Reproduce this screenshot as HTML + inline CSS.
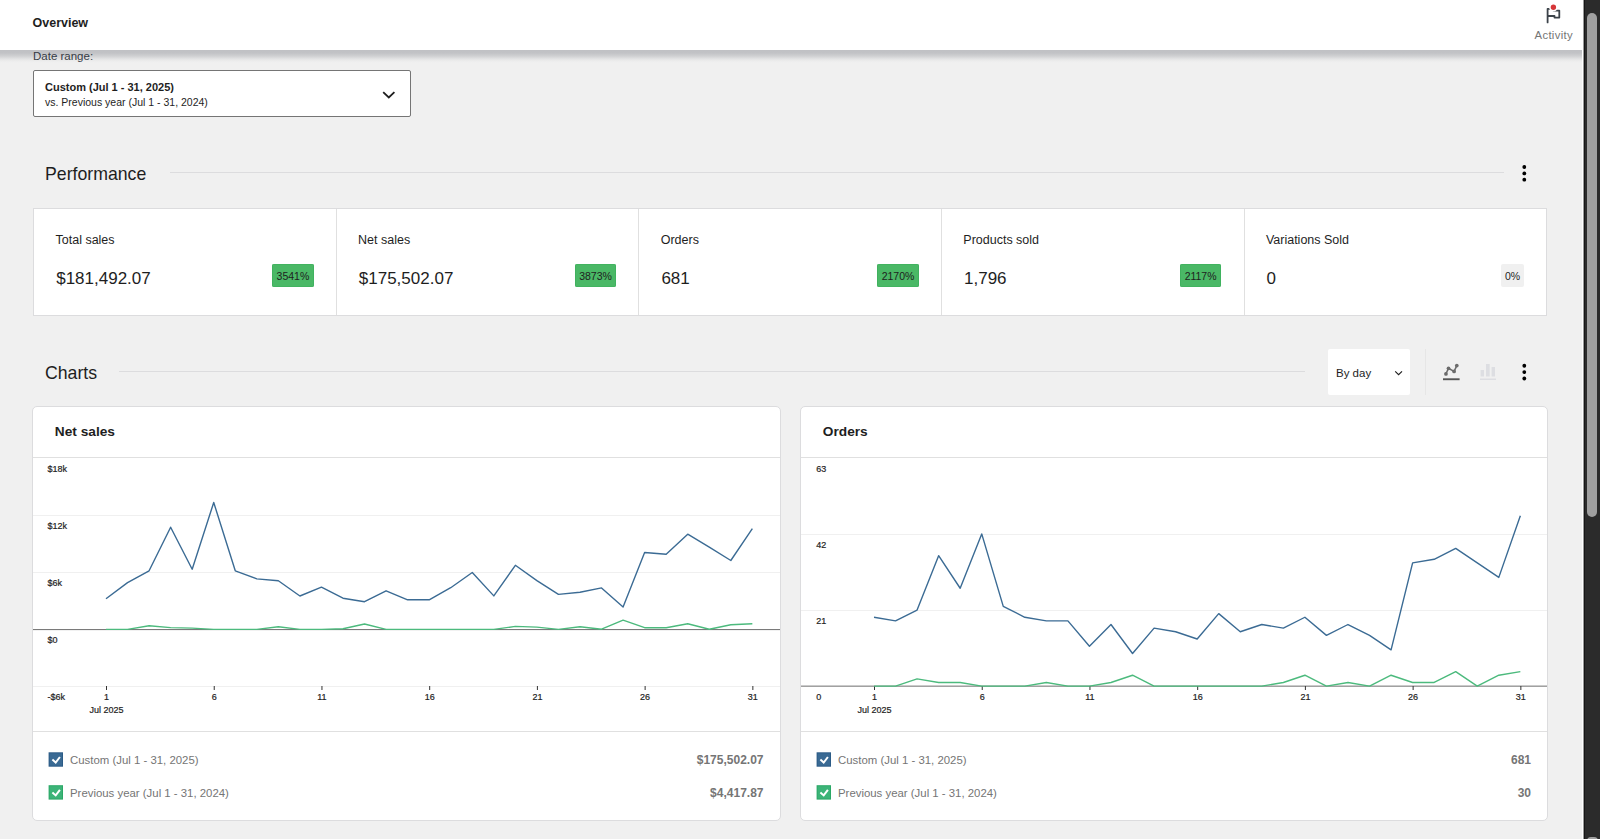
<!DOCTYPE html>
<html><head><meta charset="utf-8">
<style>
*{box-sizing:border-box;margin:0;padding:0}
html,body{width:1600px;height:839px;overflow:hidden;background:#f0f0f0;font-family:"Liberation Sans",sans-serif;color:#1e1e1e}
.a{position:absolute;white-space:nowrap}
.t{position:absolute;white-space:nowrap;line-height:1}
#hdr{position:absolute;left:0;top:0;width:1584px;height:50px;background:#fff;z-index:5}
#shadow{position:absolute;left:0;top:50px;width:1584px;height:13px;z-index:5;background:linear-gradient(to bottom,rgba(20,25,40,0.22) 0,rgba(20,25,40,0.21) 3px,rgba(20,25,40,0.15) 6px,rgba(20,25,40,0.06) 9px,rgba(20,25,40,0.015) 11px,rgba(20,25,40,0) 13px)}
#sb{position:absolute;left:1584px;top:0;width:16px;height:839px;background:#2b2b2b;border-left:1px solid #161616;z-index:6}
#thumb{position:absolute;left:1587px;top:13px;width:10px;height:504px;background:#a0a0a0;border-radius:5px;z-index:7}
.card{position:absolute;background:#fff;border:1px solid #dcdcde}
.cell{position:absolute;top:0;height:106px;border-right:1px solid #dcdcde}
.lbl{position:absolute;font-size:12.5px;line-height:1;color:#1e1e1e}
.val{position:absolute;font-size:17px;line-height:1;color:#1e1e1e}
.badge{position:absolute;width:41.8px;height:23.3px;border-radius:2px;background:#4ab866;box-shadow:inset 0 0 0 0.6px #3aad5a;color:#1e1e1e;font-size:10.5px;line-height:24.9px;text-align:center}
.kebab i{position:absolute;width:3.8px;height:3.8px;border-radius:50%;background:#000}
</style></head><body>

<div id="hdr">
  <div class="t" style="left:32.5px;top:17px;font-size:12.5px;font-weight:bold;color:#1e1e1e">Overview</div>
  <svg class="a" style="left:1540px;top:0px" width="24" height="26" viewBox="1540 0 24 26">
    <path d="M1547.6 22.4V8.8H1553.5V10.6H1559.3V17.6H1554.5V16H1547.6" fill="none" stroke="#3c434a" stroke-width="1.8" stroke-linejoin="round" stroke-linecap="round"/>
    <circle cx="1553.4" cy="7.3" r="3.5" fill="#d63638" stroke="#fff" stroke-width="1.6"/>
  </svg>
  <div class="t" style="left:1534.5px;top:29.6px;font-size:11.3px;letter-spacing:0.35px;color:#757575">Activity</div>
</div>
<div id="shadow"></div>
<div id="sb"></div><div id="thumb"></div>
<div class="a" style="left:1582px;top:0;width:1px;height:839px;background:#fff;z-index:6"></div><div class="a" style="left:1583px;top:0;width:1px;height:839px;background:#9a9a9a;z-index:6"></div>
<div class="a" style="left:1587px;top:837px;width:10.5px;height:8px;background:#a0a0a0;border-radius:4px;z-index:7"></div>

<div class="t" style="left:33px;top:50.7px;font-size:11.5px;color:#3c434a">Date range:</div>
<div class="a" style="left:33px;top:70px;width:378px;height:47px;background:#fff;border:1px solid #757575;border-radius:2px">
  <div class="t" style="left:11px;top:11px;font-size:11px;font-weight:bold">Custom (Jul 1 - 31, 2025)</div>
  <div class="t" style="left:11px;top:26px;font-size:10.5px">vs. Previous year (Jul 1 - 31, 2024)</div>
  <svg class="a" style="left:348px;top:19px" width="14" height="10" viewBox="0 0 14 10"><path d="M1.2 2.1l5.6 5.4 5.6-5.4" fill="none" stroke="#1e1e1e" stroke-width="1.8"/></svg>
</div>

<!-- Performance -->
<div class="t" style="left:45px;top:165.8px;font-size:17.7px;color:#1e1e1e">Performance</div>
<div class="a" style="left:170px;top:172px;width:1334px;height:1px;background:#dcdcde"></div>
<svg class="a" style="left:1514px;top:157px" width="20" height="32" viewBox="1514 157 20 32"><circle cx="1524.3" cy="167" r="1.9"/><circle cx="1524.3" cy="173.4" r="1.9"/><circle cx="1524.3" cy="179.7" r="1.9"/></svg>

<div class="card" style="left:33px;top:208px;width:1514px;height:108px"></div>
<div class="lbl" style="left:55.5px;top:234.4px">Total sales</div>
<div class="val" style="left:56.2px;top:269.5px">$181,492.07</div>
<div class="a" style="left:335.75px;top:209px;width:1px;height:106px;background:#e0e0e0"></div>
<div class="badge" style="left:272.0px;top:263.7px">3541%</div>
<div class="lbl" style="left:358.1px;top:234.4px">Net sales</div>
<div class="val" style="left:358.8px;top:269.5px">$175,502.07</div>
<div class="a" style="left:638.35px;top:209px;width:1px;height:106px;background:#e0e0e0"></div>
<div class="badge" style="left:574.6px;top:263.7px">3873%</div>
<div class="lbl" style="left:660.7px;top:234.4px">Orders</div>
<div class="val" style="left:661.4px;top:269.5px">681</div>
<div class="a" style="left:940.95px;top:209px;width:1px;height:106px;background:#e0e0e0"></div>
<div class="badge" style="left:877.1px;top:263.7px">2170%</div>
<div class="lbl" style="left:963.3px;top:234.4px">Products sold</div>
<div class="val" style="left:964.0px;top:269.5px">1,796</div>
<div class="a" style="left:1243.55px;top:209px;width:1px;height:106px;background:#e0e0e0"></div>
<div class="badge" style="left:1179.7px;top:263.7px">2117%</div>
<div class="lbl" style="left:1265.9px;top:234.4px">Variations Sold</div>
<div class="val" style="left:1266.6px;top:269.5px">0</div>
<div class="badge" style="left:1501px;top:264px;width:23px;background:#f0f0f0;box-shadow:none">0%</div>

<!-- Charts header -->
<div class="t" style="left:45px;top:364.6px;font-size:17.7px;color:#1e1e1e">Charts</div>
<div class="a" style="left:119px;top:371px;width:1186px;height:1px;background:#dcdcde"></div>
<div class="a" style="left:1328px;top:349px;width:82px;height:46px;background:#fff;border-radius:2px">
  <div class="t" style="left:8px;top:19px;font-size:11.5px;color:#1e1e1e">By day</div>
  <svg class="a" style="left:64px;top:18px" width="12" height="10" viewBox="1392 367 12 10"><path d="M1395.2 371.4l3.4 3.3 3.4-3.3" fill="none" stroke="#1e1e1e" stroke-width="1.15"/></svg>
</div>
<div class="a" style="left:1425px;top:349px;width:1px;height:46px;background:#e6e6e6"></div>
<svg class="a" style="left:1440px;top:360px" width="24" height="24" viewBox="0 0 24 24">
  <path d="M5.95 13.9 L8.5 8.3 L14.1 11.4 L16.8 5.6" fill="none" stroke="#6b6b6b" stroke-width="1.5"/>
  <circle cx="5.95" cy="13.9" r="1.85" fill="#6b6b6b"/><circle cx="8.5" cy="8.3" r="1.85" fill="#6b6b6b"/><circle cx="14.1" cy="11.4" r="1.85" fill="#6b6b6b"/><circle cx="16.8" cy="5.6" r="1.85" fill="#6b6b6b"/>
  <rect x="3" y="18.3" width="16.6" height="1.9" fill="#555"/>
</svg>
<svg class="a" style="left:1476px;top:360px" width="24" height="24" viewBox="0 0 24 24">
  <rect x="4.6" y="10" width="3.4" height="6.5" fill="#dddee2"/><rect x="10" y="4" width="3.7" height="12.5" fill="#dddee2"/><rect x="15.6" y="7" width="3.4" height="9.5" fill="#dddee2"/>
  <rect x="4" y="18.5" width="16" height="1.5" fill="#dddee2"/>
</svg>
<svg class="a" style="left:1514px;top:356px" width="20" height="32" viewBox="1514 356 20 32"><circle cx="1524.3" cy="365.75" r="1.9"/><circle cx="1524.3" cy="372.1" r="1.9"/><circle cx="1524.3" cy="378.5" r="1.9"/></svg>

<div class="card" style="left:32px;top:406px;width:749px;height:415px;border-radius:5px;border-color:#dcdcde"></div>
<div class="t" style="left:54.8px;top:425px;font-size:13.7px;font-weight:bold;color:#1e1e1e">Net sales</div>
<svg class="a" style="left:32px;top:0px" width="749" height="839" viewBox="32 0 749 839">
<rect x="33" y="457" width="747" height="1" fill="#e0e0e0"/>
<rect x="33" y="515" width="747" height="1" fill="#f0f0f0"/>
<rect x="33" y="572" width="747" height="1" fill="#f0f0f0"/>
<rect x="33" y="686" width="747" height="1" fill="#f0f0f0"/>
<rect x="33" y="629.00" width="747" height="1.1" fill="#7a7a7a"/>
<rect x="106.00" y="686" width="1" height="4" fill="#333"/>
<text x="106.50" y="700.3" font-size="9" text-anchor="middle" fill="#1e1e1e" stroke="#1e1e1e" stroke-width="0.2" font-family="Liberation Sans">1</text>
<rect x="213.73" y="686" width="1" height="4" fill="#333"/>
<text x="214.23" y="700.3" font-size="9" text-anchor="middle" fill="#1e1e1e" stroke="#1e1e1e" stroke-width="0.2" font-family="Liberation Sans">6</text>
<rect x="321.45" y="686" width="1" height="4" fill="#333"/>
<text x="321.95" y="700.3" font-size="9" text-anchor="middle" fill="#1e1e1e" stroke="#1e1e1e" stroke-width="0.2" font-family="Liberation Sans">11</text>
<rect x="429.18" y="686" width="1" height="4" fill="#333"/>
<text x="429.68" y="700.3" font-size="9" text-anchor="middle" fill="#1e1e1e" stroke="#1e1e1e" stroke-width="0.2" font-family="Liberation Sans">16</text>
<rect x="536.90" y="686" width="1" height="4" fill="#333"/>
<text x="537.40" y="700.3" font-size="9" text-anchor="middle" fill="#1e1e1e" stroke="#1e1e1e" stroke-width="0.2" font-family="Liberation Sans">21</text>
<rect x="644.62" y="686" width="1" height="4" fill="#333"/>
<text x="645.12" y="700.3" font-size="9" text-anchor="middle" fill="#1e1e1e" stroke="#1e1e1e" stroke-width="0.2" font-family="Liberation Sans">26</text>
<rect x="752.35" y="686" width="1" height="4" fill="#333"/>
<text x="752.85" y="700.3" font-size="9" text-anchor="middle" fill="#1e1e1e" stroke="#1e1e1e" stroke-width="0.2" font-family="Liberation Sans">31</text>
<text x="106.50" y="712.9" font-size="9" text-anchor="middle" fill="#1e1e1e" stroke="#1e1e1e" stroke-width="0.2" font-family="Liberation Sans">Jul 2025</text>
<text x="47.5" y="472.2" font-size="9" fill="#1e1e1e" stroke="#1e1e1e" stroke-width="0.2" font-family="Liberation Sans">$18k</text>
<text x="47.5" y="529.2" font-size="9" fill="#1e1e1e" stroke="#1e1e1e" stroke-width="0.2" font-family="Liberation Sans">$12k</text>
<text x="47.5" y="586.2" font-size="9" fill="#1e1e1e" stroke="#1e1e1e" stroke-width="0.2" font-family="Liberation Sans">$6k</text>
<text x="47.5" y="643.2" font-size="9" fill="#1e1e1e" stroke="#1e1e1e" stroke-width="0.2" font-family="Liberation Sans">$0</text>
<text x="47.5" y="700.2" font-size="9" fill="#1e1e1e" stroke="#1e1e1e" stroke-width="0.2" font-family="Liberation Sans">-$6k</text>
<path d="M106.00 629.40 L127.55 629.40 L149.09 625.80 L170.63 627.60 L192.18 628.10 L213.73 629.40 L235.27 629.40 L256.81 629.40 L278.36 626.70 L299.91 629.40 L321.45 629.40 L343.00 628.70 L364.54 624.00 L386.09 629.40 L407.63 629.40 L429.18 629.40 L450.72 629.40 L472.27 629.40 L493.81 629.40 L515.36 626.40 L536.90 627.10 L558.45 629.40 L579.99 626.70 L601.54 629.20 L623.08 620.20 L644.62 627.70 L666.17 627.70 L687.72 623.80 L709.26 629.20 L730.81 624.70 L752.35 623.80" fill="none" stroke="#4cba7d" stroke-width="1.4" stroke-linejoin="round"/>
<path d="M106.00 598.70 L127.55 582.60 L149.09 570.80 L170.63 527.20 L192.18 569.20 L213.73 502.50 L235.27 570.80 L256.81 578.90 L278.36 580.70 L299.91 596.00 L321.45 587.10 L343.00 598.20 L364.54 601.70 L386.09 590.80 L407.63 599.80 L429.18 599.80 L450.72 587.70 L472.27 572.50 L493.81 595.90 L515.36 565.30 L536.90 580.60 L558.45 594.40 L579.99 592.30 L601.54 587.90 L623.08 607.10 L644.62 552.50 L666.17 554.20 L687.72 534.20 L709.26 547.20 L730.81 560.50 L752.35 528.70" fill="none" stroke="#3b6b94" stroke-width="1.4" stroke-linejoin="round"/>
<rect x="33" y="731" width="747" height="1" fill="#e0e0e0"/>
<rect x="48.6" y="752.3" width="14.4" height="14.4" fill="#2b5b86"/>
<rect x="49.6" y="753.3" width="12.4" height="12.4" fill="#3a6a94"/>
<path d="M52.40 759.60 L55.70 762.50 L59.90 757.00" fill="none" stroke="#fff" stroke-width="2"/>
<rect x="48.6" y="785.2" width="14.4" height="14.4" fill="#2aa866"/>
<rect x="49.6" y="786.2" width="12.4" height="12.4" fill="#3cb478"/>
<path d="M52.40 792.50 L55.70 795.40 L59.90 789.90" fill="none" stroke="#fff" stroke-width="2"/>
</svg>
<div class="t" style="left:70px;top:755px;font-size:11.4px;color:#757575">Custom (Jul 1 - 31, 2025)</div>
<div class="t" style="left:70px;top:788px;font-size:11.4px;color:#757575">Previous year (Jul 1 - 31, 2024)</div>
<div class="t" style="left:32px;width:731.5px;text-align:right;top:754px;font-size:12px;font-weight:bold;color:#757575">$175,502.07</div>
<div class="t" style="left:32px;width:731.5px;text-align:right;top:787px;font-size:12px;font-weight:bold;color:#757575">$4,417.87</div>
<div class="card" style="left:800px;top:406px;width:748px;height:415px;border-radius:5px;border-color:#dcdcde"></div>
<div class="t" style="left:822.8px;top:425px;font-size:13.7px;font-weight:bold;color:#1e1e1e">Orders</div>
<svg class="a" style="left:800px;top:0px" width="748" height="839" viewBox="800 0 748 839">
<rect x="801" y="457" width="746" height="1" fill="#e0e0e0"/>
<rect x="801" y="534" width="746" height="1" fill="#f0f0f0"/>
<rect x="801" y="610" width="746" height="1" fill="#f0f0f0"/>
<rect x="801" y="685.60" width="746" height="1.1" fill="#7a7a7a"/>
<rect x="874.00" y="686" width="1" height="4" fill="#333"/>
<text x="874.50" y="700.3" font-size="9" text-anchor="middle" fill="#1e1e1e" stroke="#1e1e1e" stroke-width="0.2" font-family="Liberation Sans">1</text>
<rect x="981.73" y="686" width="1" height="4" fill="#333"/>
<text x="982.23" y="700.3" font-size="9" text-anchor="middle" fill="#1e1e1e" stroke="#1e1e1e" stroke-width="0.2" font-family="Liberation Sans">6</text>
<rect x="1089.45" y="686" width="1" height="4" fill="#333"/>
<text x="1089.95" y="700.3" font-size="9" text-anchor="middle" fill="#1e1e1e" stroke="#1e1e1e" stroke-width="0.2" font-family="Liberation Sans">11</text>
<rect x="1197.17" y="686" width="1" height="4" fill="#333"/>
<text x="1197.67" y="700.3" font-size="9" text-anchor="middle" fill="#1e1e1e" stroke="#1e1e1e" stroke-width="0.2" font-family="Liberation Sans">16</text>
<rect x="1304.90" y="686" width="1" height="4" fill="#333"/>
<text x="1305.40" y="700.3" font-size="9" text-anchor="middle" fill="#1e1e1e" stroke="#1e1e1e" stroke-width="0.2" font-family="Liberation Sans">21</text>
<rect x="1412.62" y="686" width="1" height="4" fill="#333"/>
<text x="1413.12" y="700.3" font-size="9" text-anchor="middle" fill="#1e1e1e" stroke="#1e1e1e" stroke-width="0.2" font-family="Liberation Sans">26</text>
<rect x="1520.35" y="686" width="1" height="4" fill="#333"/>
<text x="1520.85" y="700.3" font-size="9" text-anchor="middle" fill="#1e1e1e" stroke="#1e1e1e" stroke-width="0.2" font-family="Liberation Sans">31</text>
<text x="874.50" y="712.9" font-size="9" text-anchor="middle" fill="#1e1e1e" stroke="#1e1e1e" stroke-width="0.2" font-family="Liberation Sans">Jul 2025</text>
<text x="816.2" y="472.2" font-size="9" fill="#1e1e1e" stroke="#1e1e1e" stroke-width="0.2" font-family="Liberation Sans">63</text>
<text x="816.2" y="548.2" font-size="9" fill="#1e1e1e" stroke="#1e1e1e" stroke-width="0.2" font-family="Liberation Sans">42</text>
<text x="816.2" y="624.2" font-size="9" fill="#1e1e1e" stroke="#1e1e1e" stroke-width="0.2" font-family="Liberation Sans">21</text>
<text x="816.2" y="700.2" font-size="9" fill="#1e1e1e" stroke="#1e1e1e" stroke-width="0.2" font-family="Liberation Sans">0</text>
<path d="M874.00 686.10 L895.54 686.10 L917.09 678.85 L938.63 682.48 L960.18 682.48 L981.73 686.10 L1003.27 686.10 L1024.82 686.10 L1046.36 682.48 L1067.90 686.10 L1089.45 686.10 L1110.99 682.48 L1132.54 675.23 L1154.09 686.10 L1175.63 686.10 L1197.17 686.10 L1218.72 686.10 L1240.27 686.10 L1261.81 686.10 L1283.36 682.48 L1304.90 675.23 L1326.45 686.10 L1347.99 682.48 L1369.54 686.10 L1391.08 675.23 L1412.62 682.48 L1434.17 682.48 L1455.72 671.60 L1477.26 686.10 L1498.81 675.23 L1520.35 671.60" fill="none" stroke="#4cba7d" stroke-width="1.4" stroke-linejoin="round"/>
<path d="M874.00 617.25 L895.54 620.87 L917.09 610.00 L938.63 555.64 L960.18 588.26 L981.73 533.90 L1003.27 606.38 L1024.82 617.25 L1046.36 620.87 L1067.90 620.87 L1089.45 646.24 L1110.99 624.50 L1132.54 653.49 L1154.09 628.12 L1175.63 631.74 L1197.17 638.99 L1218.72 613.62 L1240.27 631.74 L1261.81 624.50 L1283.36 628.12 L1304.90 617.25 L1326.45 635.37 L1347.99 624.50 L1369.54 635.37 L1391.08 649.86 L1412.62 562.89 L1434.17 559.27 L1455.72 548.40 L1477.26 562.89 L1498.81 577.39 L1520.35 515.78" fill="none" stroke="#3b6b94" stroke-width="1.4" stroke-linejoin="round"/>
<rect x="801" y="731" width="746" height="1" fill="#e0e0e0"/>
<rect x="816.6" y="752.3" width="14.4" height="14.4" fill="#2b5b86"/>
<rect x="817.6" y="753.3" width="12.4" height="12.4" fill="#3a6a94"/>
<path d="M820.40 759.60 L823.70 762.50 L827.90 757.00" fill="none" stroke="#fff" stroke-width="2"/>
<rect x="816.6" y="785.2" width="14.4" height="14.4" fill="#2aa866"/>
<rect x="817.6" y="786.2" width="12.4" height="12.4" fill="#3cb478"/>
<path d="M820.40 792.50 L823.70 795.40 L827.90 789.90" fill="none" stroke="#fff" stroke-width="2"/>
</svg>
<div class="t" style="left:838px;top:755px;font-size:11.4px;color:#757575">Custom (Jul 1 - 31, 2025)</div>
<div class="t" style="left:838px;top:788px;font-size:11.4px;color:#757575">Previous year (Jul 1 - 31, 2024)</div>
<div class="t" style="left:800px;width:731px;text-align:right;top:754px;font-size:12px;font-weight:bold;color:#757575">681</div>
<div class="t" style="left:800px;width:731px;text-align:right;top:787px;font-size:12px;font-weight:bold;color:#757575">30</div>

</body></html>
